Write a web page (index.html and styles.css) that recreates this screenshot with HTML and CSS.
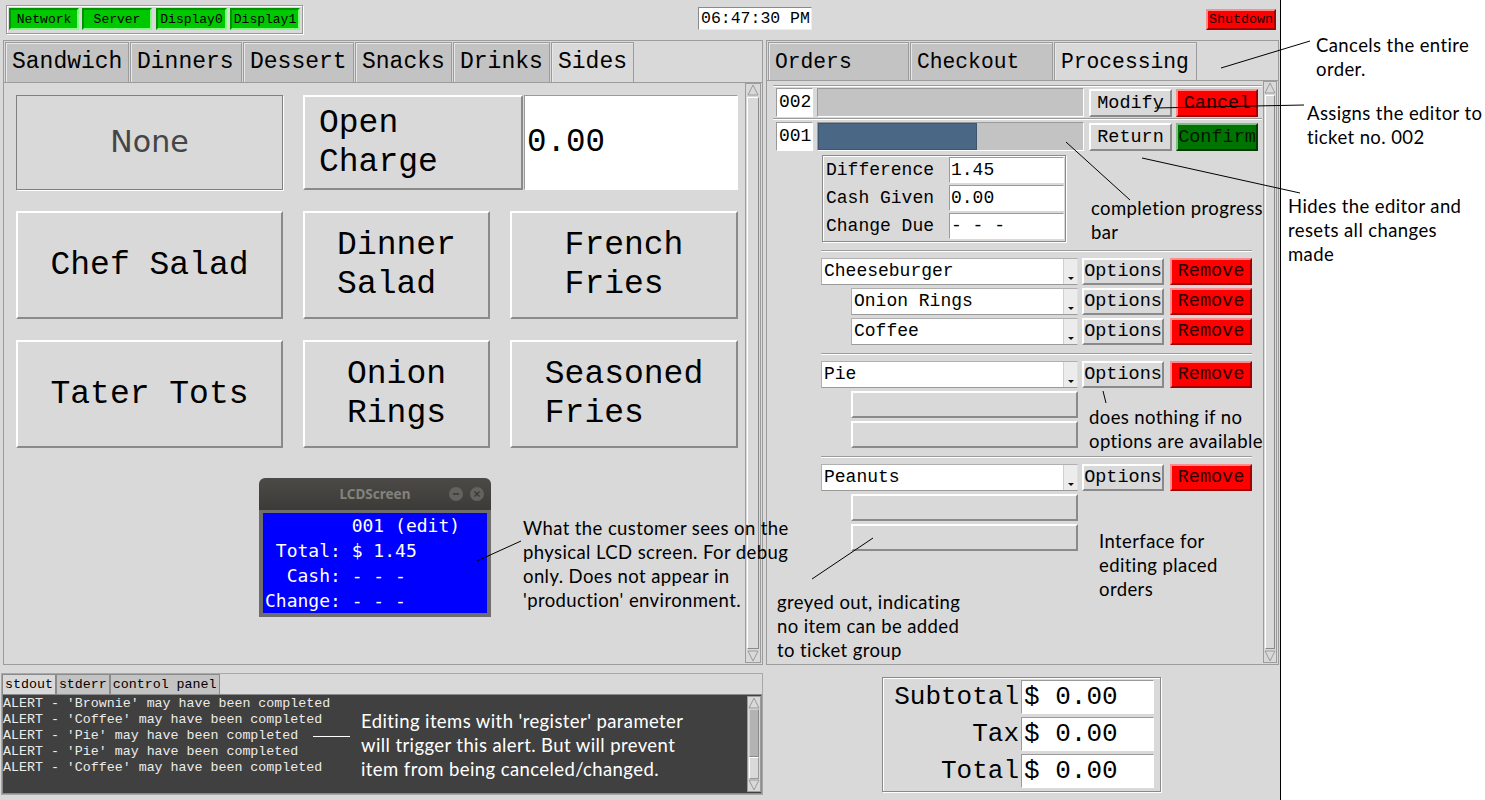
FILE: index.html
```html
<!DOCTYPE html>
<html>
<head>
<meta charset="utf-8">
<title>POS</title>
<link rel="stylesheet" href="styles.css">
</head>
<body>
<div class="page">
  <div class="app">
    <header class="topbar">
      <div class="status-frame">
        <span class="status">Network</span>
        <span class="status s2">Server</span>
        <span class="status s3">Display0</span>
        <span class="status s4">Display1</span>
      </div>
      <div class="clock">06:47:30 PM</div>
      <div class="shutdown">Shutdown</div>
    </header>

    <div class="main">
      <section class="panel left-panel">
        <nav class="tabs big-tabs">
          <span class="tab">Sandwich</span>
          <span class="tab">Dinners</span>
          <span class="tab">Dessert</span>
          <span class="tab">Snacks</span>
          <span class="tab">Drinks</span>
          <span class="tab active">Sides</span>
        </nav>
        <div class="tab-body">
          <div class="menu-area">
            <div class="menu-grid">
              <div class="mbtn none">None</div>
              <div class="charge-row">
                <div class="mbtn open-charge"><span>Open<br>Charge</span></div>
                <div class="charge-entry">0.00</div>
              </div>
              <div class="mbtn"><span>Chef Salad</span></div>
              <div class="mbtn"><span>Dinner<br>Salad</span></div>
              <div class="mbtn"><span>French<br>Fries</span></div>
              <div class="mbtn"><span>Tater Tots</span></div>
              <div class="mbtn"><span>Onion<br>Rings</span></div>
              <div class="mbtn"><span>Seasoned<br>Fries</span></div>
            </div>
          </div>
          <div class="vscroll">
            <svg class="arr" viewBox="0 0 12 12"><polygon points="6,1 11,11 1,11" fill="#d9d9d9" stroke="#9a9a9a"/></svg>
            <div class="thumb"></div>
            <svg class="arr" viewBox="0 0 12 12"><polygon points="1,1 11,1 6,11" fill="#d9d9d9" stroke="#9a9a9a"/></svg>
          </div>
        </div>
      </section>

      <section class="panel right-panel">
        <nav class="tabs small-tabs">
          <span class="tab">Orders</span>
          <span class="tab">Checkout</span>
          <span class="tab active">Processing</span>
        </nav>
        <div class="tab-body">
          <div class="canvas">
            <div class="sep full first"></div>
            <div class="trow first">
              <div class="tno">002</div>
              <div class="progress"></div>
              <div class="rbtn">Modify</div>
              <div class="rbtn red">Cancel</div>
            </div>
            <div class="sep full"></div>
            <div class="trow second">
              <div class="tno">001</div>
              <div class="progress"><div class="fill" style="width:60%"></div></div>
              <div class="rbtn">Return</div>
              <div class="rbtn green">Confirm</div>
            </div>
            <div class="payment">
              <span class="plabel">Difference</span><span class="pentry">1.45</span>
              <span class="plabel">Cash Given</span><span class="pentry">0.00</span>
              <span class="plabel">Change Due</span><span class="pentry">- - -</span>
            </div>

            <div class="sep item"></div>
            <div class="group">
              <div class="irow"><div class="combo"><span class="txt">Cheeseburger</span><span class="caret"></span></div><div class="rbtn">Options</div><div class="rbtn red">Remove</div></div>
              <div class="irow sub"><div class="combo"><span class="txt">Onion Rings</span><span class="caret"></span></div><div class="rbtn">Options</div><div class="rbtn red">Remove</div></div>
              <div class="irow sub"><div class="combo"><span class="txt">Coffee</span><span class="caret"></span></div><div class="rbtn">Options</div><div class="rbtn red">Remove</div></div>
            </div>
            <div class="sep item"></div>
            <div class="group">
              <div class="irow"><div class="combo"><span class="txt">Pie</span><span class="caret"></span></div><div class="rbtn">Options</div><div class="rbtn red">Remove</div></div>
              <div class="irow sub"><div class="empty"></div></div>
              <div class="irow sub"><div class="empty"></div></div>
            </div>
            <div class="sep item"></div>
            <div class="group">
              <div class="irow"><div class="combo"><span class="txt">Peanuts</span><span class="caret"></span></div><div class="rbtn">Options</div><div class="rbtn red">Remove</div></div>
              <div class="irow sub"><div class="empty"></div></div>
              <div class="irow sub"><div class="empty"></div></div>
            </div>
          </div>
          <div class="vscroll thin">
            <svg class="arr" viewBox="0 0 12 12"><polygon points="6,1 11,11 1,11" fill="#d9d9d9" stroke="#9a9a9a"/></svg>
            <div class="thumb"></div>
            <svg class="arr" viewBox="0 0 12 12"><polygon points="1,1 11,1 6,11" fill="#d9d9d9" stroke="#9a9a9a"/></svg>
          </div>
        </div>
      </section>
    </div>

    <div class="bottom">
      <section class="console">
        <nav class="ctabs">
          <span class="ctab active">stdout</span>
          <span class="ctab">stderr</span>
          <span class="ctab">control panel</span>
        </nav>
        <div class="cbody">
          <div class="log">ALERT - 'Brownie' may have been completed
ALERT - 'Coffee' may have been completed
ALERT - 'Pie' may have been completed
ALERT - 'Pie' may have been completed
ALERT - 'Coffee' may have been completed</div>
          <div class="vscroll cscroll">
            <svg class="arr" viewBox="0 0 12 12"><polygon points="6,1 11,11 1,11" fill="#d9d9d9" stroke="#9a9a9a"/></svg>
            <div class="cthumb"></div>
            <div class="ctrough"></div>
            <svg class="arr" viewBox="0 0 12 12"><polygon points="1,1 11,1 6,11" fill="#d9d9d9" stroke="#9a9a9a"/></svg>
          </div>
        </div>
      </section>
      <section class="totals">
        <span class="tlabel">Subtotal</span><span class="tentry">$ 0.00</span>
        <span class="tlabel">Tax</span><span class="tentry">$ 0.00</span>
        <span class="tlabel">Total</span><span class="tentry">$ 0.00</span>
      </section>
    </div>
  </div>
  <div class="notes"></div>

  <div class="lcd">
    <div class="lcd-title">
      <span class="lcd-name">LCDScreen</span>
      <div class="wbtns">
        <span class="wbtn"><svg viewBox="0 0 14 14" width="14" height="14"><line x1="4" y1="7" x2="10" y2="7" stroke="#3a3935" stroke-width="1.6"/></svg></span>
        <span class="wbtn"><svg viewBox="0 0 14 14" width="14" height="14"><path d="M4.5 4.5L9.5 9.5M9.5 4.5L4.5 9.5" stroke="#3a3935" stroke-width="1.4"/></svg></span>
      </div>
    </div>
    <div class="lcd-body">
      <div class="lcd-screen">        001 (edit)
 Total: $ 1.45
  Cash: - - -
Change: - - -</div>
    </div>
  </div>

  <div class="note n-cancel">Cancels the entire<br>order.</div>
  <div class="note n-assign">Assigns the editor to<br>ticket no. 002</div>
  <div class="note n-hide">Hides the editor and<br>resets all changes<br>made</div>
  <div class="note n-progress">completion progress<br>bar</div>
  <div class="note n-options">does nothing if no<br>options are available</div>
  <div class="note n-interface">Interface for<br>editing placed<br>orders</div>
  <div class="note n-grey">greyed out, indicating<br>no item can be added<br>to ticket group</div>
  <div class="note n-lcd">What the customer sees on the<br>physical LCD screen. For debug<br>only. Does not appear in<br>'production' environment.</div>
  <div class="note n-console">Editing items with 'register' parameter<br>will trigger this alert. But will prevent<br>item from being canceled/changed.</div>

  <svg class="lines" width="1485" height="800" viewBox="0 0 1485 800">
    <g stroke="#000" stroke-width="1" fill="none">
      <line x1="1221" y1="68" x2="1310" y2="41"/>
      <line x1="1155" y1="108" x2="1304" y2="105"/>
      <line x1="1142" y1="158" x2="1300" y2="193"/>
      <line x1="1066" y1="142" x2="1130" y2="200"/>
      <line x1="1103" y1="391" x2="1106" y2="403"/>
      <line x1="873" y1="538" x2="812" y2="579"/>
      <line x1="477" y1="561" x2="521" y2="541"/>
    </g>
    <line x1="313" y1="736.5" x2="350" y2="736.5" stroke="#fff" stroke-width="1"/>
  </svg>
</div>
</body>
</html>
```
FILE: styles.css
```css
* { box-sizing: border-box; margin: 0; padding: 0; }
html, body { width: 1485px; height: 800px; overflow: hidden; background: #fff; }
body { font-family: "Liberation Mono", monospace; color: #000; }

.page { position: relative; display: flex; width: 1485px; height: 800px; }
.app { width: 1281px; height: 800px; flex: none; background: #d9d9d9; border-right: 1px solid #000; display: flex; flex-direction: column; }
.notes { flex: 1; background: #fff; }

/* top bar */
.topbar { height: 40px; flex: none; display: flex; align-items: flex-start; }
.status-frame { margin: 5px 0 0 6px; width: 297px; height: 29px; border: 1px solid #9a9a9a; box-shadow: inset 1px 1px 0 #fff, 1px 1px 0 #fff; display: flex; padding: 2px 0 0 2px; }
.status { width: 70px; height: 22px; background: #00c800; border: 2px solid; border-color: #009000 #80ff80 #80ff80 #009000; font-size: 13px; display: flex; align-items: center; justify-content: center; }
.status.s2 { margin-left: 3px; }
.status.s3 { margin-left: 4px; width: 71px; }
.status.s4 { margin-left: 3px; }
.clock { margin: 7px 0 0 395px; width: 114px; height: 23px; background: #fff; border: 1px solid; border-color: #8a8a8a #ececec #ececec #8a8a8a; font-size: 16.5px; line-height: 21px; padding-left: 2px; }
.shutdown { margin: 9px 4px 0 auto; width: 70px; height: 21px; background: #f00; border: 2px solid; border-color: #ff8c8c #a00000 #a00000 #ff8c8c; font-size: 13.3px; color: #200000; display: flex; align-items: center; justify-content: center; }

/* panels */
.main { display: flex; height: 626px; flex: none; }
.panel { margin-left: 3px; height: 625px; border: 1px solid #9c9c9c; display: flex; flex-direction: column; }
.left-panel { width: 760px; }
.right-panel { width: 513px; }
.tabs { display: flex; margin-top: 1px; padding-left: 1px; gap: 1px; flex: none; }
.tab { padding: 0 6px; border: 1px solid #9c9c9c; border-bottom: none; background: #c3c3c3; box-shadow: inset 1px 1px 0 #e8e8e8; display: flex; align-items: center; white-space: nowrap; flex: none; }
.tab.active { background: #d9d9d9; position: relative; z-index: 1; margin-bottom: -1px; }
.big-tabs .tab { font-size: 23px; height: 40px; padding: 0 0 2px 6px; }
.big-tabs .tab:nth-child(1) { width: 124px; }
.big-tabs .tab:nth-child(2) { width: 112px; }
.big-tabs .tab:nth-child(3) { width: 111px; }
.big-tabs .tab:nth-child(4) { width: 97px; }
.big-tabs .tab:nth-child(5) { width: 97px; }
.big-tabs .tab:nth-child(6) { width: 83px; }
.small-tabs .tab { font-size: 21.3px; height: 38px; width: 143px; }
.small-tabs .tab:first-child { width: 141px; }
.tab-body { flex: 1; display: flex; border-top: 1px solid #9c9c9c; background: #d9d9d9; min-height: 0; }

/* menu buttons */
.menu-area { flex: 1; padding: 12px 0 0 12px; }
.menu-grid { display: grid; grid-template-columns: 267px 187px 228px; grid-template-rows: 95px 108px 108px; column-gap: 20px; row-gap: 21px; }
.mbtn { display: flex; align-items: center; justify-content: center; font-family: "Liberation Mono", monospace; font-size: 33px; line-height: 39px; background: #d9d9d9; border: 2px solid; border-color: #fff #8a8a8a #8a8a8a #fff; }
.mbtn span { text-align: left; white-space: nowrap; }
.mbtn.none { border: 1px solid #808080; box-shadow: 1px 1px 0 #fff; font-family: "DejaVu Sans", sans-serif; font-size: 30px; color: #454545; padding-bottom: 3px; }
.charge-row { grid-column: 2 / 4; display: flex; gap: 1px; }
.mbtn.open-charge { width: 220px; justify-content: flex-start; padding-left: 14px; }
.charge-entry { width: 214px; background: #fff; border: 1px solid; border-color: #9a9a9a #fff #fff #9a9a9a; font-size: 32.5px; display: flex; align-items: center; padding-left: 2px; }

/* scrollbars */
.vscroll { width: 16px; margin: 0 1px 1px 0; border: 1px solid #9c9c9c; display: flex; flex-direction: column; background: #d9d9d9; flex: none; }
.vscroll.thin { width: 14px; }
.vscroll .arr { width: 100%; height: 12px; flex: none; display: block; }
.vscroll .thumb { flex: 1; border: 1px solid; border-color: #fff #8a8a8a #8a8a8a #fff; margin: 1px 1px; }

/* right canvas */
.canvas { flex: 1; }
.sep { height: 2px; border-top: 1px solid #9c9c9c; border-bottom: 1px solid #fff; }
.sep.full { margin: 1px 1px 0 6px; }
.sep.full.first { margin-top: 4px; }
.sep.item { margin: 8px 0 0 54px; width: 431px; }
.trow { display: flex; height: 29px; margin: 1px 0 0 9px; }
.trow.second { margin-top: 2px; }
.tno { width: 37px; background: #fff; border: 1px solid; border-color: #9a9a9a #fff #fff #9a9a9a; font-size: 18px; line-height: 27px; padding-left: 2px; }
.progress { width: 267px; margin-left: 4px; background: #c3c3c3; border: 1px solid; border-color: #9a9a9a #fff #fff #9a9a9a; display: flex; }
.progress .fill { background: #4a6785; height: 100%; border: 1px solid #3c566f; }
.rbtn { height: 28px; width: 83px; margin-left: 5px; font-size: 18.5px; background: #d9d9d9; border: 2px solid; border-color: #fff #8a8a8a #8a8a8a #fff; display: flex; align-items: center; justify-content: center; white-space: nowrap; }
.trow .rbtn { margin-top: 1px; }
.trow .rbtn.red, .trow .rbtn.green { width: 82px; margin-left: 4px; }
.rbtn.red { background: #f00; border-color: #ff8c8c #a00000 #a00000 #ff8c8c; color: #2a0000; }
.rbtn.green { background: #007400; border-color: #7fbf7f #003a00 #003a00 #7fbf7f; color: #001800; }

.payment { margin: 4px 0 0 55px; width: 244px; height: 87px; border: 1px solid #8a8a8a; box-shadow: inset 1px 1px 0 #fff, 1px 1px 0 #fff; padding: 1px 0 0 3px; display: grid; grid-template-columns: 123px 115px; grid-auto-rows: 26px; row-gap: 2px; }
.plabel { font-size: 18px; line-height: 26px; white-space: nowrap; }
.pentry { background: #fff; border: 1px solid; border-color: #9a9a9a #fff #fff #9a9a9a; font-size: 18px; line-height: 24px; padding-left: 1px; white-space: nowrap; }

.group { margin-left: 54px; }
.irow { display: flex; height: 27px; margin-top: 3px; }
.irow:first-child { margin-top: 6px; }
.irow.sub { padding-left: 30px; }
.combo { width: 257px; display: flex; background: #fff; border: 1px solid; border-color: #b0b0b0 #e0e0e0 #9a9a9a #b0b0b0; }
.sub .combo { width: 227px; }
.combo .txt { flex: 1; font-size: 18px; line-height: 24px; padding-left: 2px; white-space: nowrap; }
.combo .caret { width: 14px; background: #ececec; border-left: 1px solid #d0d0d0; display: flex; align-items: flex-end; justify-content: center; padding-bottom: 4px; }
.combo .caret::after { content: ""; width: 0; height: 0; border-left: 3px solid transparent; border-right: 3px solid transparent; border-top: 3px solid #111; }
.irow .rbtn { width: 82px; height: 27px; margin-left: 4px; }
.irow .rbtn.red { margin-left: 6px; }
.empty { width: 227px; background: #d9d9d9; border: 2px solid; border-color: #fff #8a8a8a #8a8a8a #fff; }

/* bottom */
.bottom { display: flex; flex: 1; }
.console { margin: 7px 0 0 1px; width: 762px; height: 122px; border: 1px solid #a8a8a8; display: flex; flex-direction: column; }
.ctabs { display: flex; height: 20px; flex: none; }
.ctab { font-size: 13.3px; line-height: 19px; padding: 0 2px; border: 1px solid #8a8a8a; border-bottom: none; background: #c3c3c3; white-space: nowrap; }
.ctab.active { background: #d9d9d9; }
.cbody { flex: 1; display: flex; background: #404040; border: 1px solid #8a8a8a; }
.log { flex: 1; color: #ececec; font-size: 13.3px; line-height: 16px; padding-top: 1px; white-space: pre; }
.vscroll.cscroll { width: 14px; margin: 1px 0 1px 0; }
.cthumb { height: 48px; background: #b3b3b3; border: 1px solid; border-color: #d0d0d0 #8a8a8a #8a8a8a #d0d0d0; margin: 0 1px; }
.ctrough { flex: 1; border: 1px solid; border-color: #fff #9a9a9a #9a9a9a #fff; margin: 0 1px; }

.totals { margin: 11px 0 0 119px; width: 279px; height: 115px; border: 1px solid #8a8a8a; box-shadow: inset 1px 1px 0 #fff, 1px 1px 0 #fff; display: grid; grid-template-columns: 136px 133px; grid-auto-rows: 34px; row-gap: 3px; column-gap: 2px; padding: 2px 0 0 0; }
.tlabel { text-align: right; font-size: 26px; line-height: 34px; }
.tentry { background: #fff; border: 1px solid; border-color: #9a9a9a #fff #fff #9a9a9a; font-size: 26px; line-height: 32px; padding-left: 2px; white-space: nowrap; }

/* LCD window */
.lcd { position: absolute; left: 259px; top: 478px; width: 232px; height: 139px; z-index: 5; }
.lcd-title { height: 32px; background: linear-gradient(#4b4a46, #3c3b37); border-radius: 6px 6px 0 0; display: grid; grid-template-columns: 1fr auto 1fr; align-items: center; }
.lcd-name { grid-column: 2; font-family: "Noto Sans", "DejaVu Sans", sans-serif; font-weight: bold; font-size: 13.5px; color: #84827d; }
.wbtns { grid-column: 3; justify-self: end; display: flex; gap: 7px; padding-right: 7px; }
.wbtn { width: 14px; height: 14px; border-radius: 50%; background: #63625e; display: flex; }
.lcd-body { height: 107px; background: #6e6e6e; padding: 3px 4px 4px 4px; }
.lcd-screen { background: #0000fe; height: 100px; color: #fff; font-family: "DejaVu Sans Mono", monospace; font-size: 18px; line-height: 25px; white-space: pre; padding-left: 2px; }

/* annotations */
.note { position: absolute; font-family: "Lato", "Open Sans", sans-serif; font-size: 18.5px; letter-spacing: 0.4px; line-height: 24px; color: #000; white-space: nowrap; z-index: 6; }
.n-cancel { left: 1316px; top: 33px; }
.n-assign { left: 1307px; top: 101px; }
.n-hide { left: 1288px; top: 194px; }
.n-progress { left: 1091px; top: 196px; }
.n-options { left: 1089px; top: 405px; }
.n-interface { left: 1099px; top: 529px; }
.n-grey { left: 777px; top: 590px; }
.n-lcd { left: 523px; top: 516px; }
.n-console { left: 361px; top: 709px; color: #fff; }
.lines { position: absolute; left: 0; top: 0; z-index: 7; pointer-events: none; }
```
